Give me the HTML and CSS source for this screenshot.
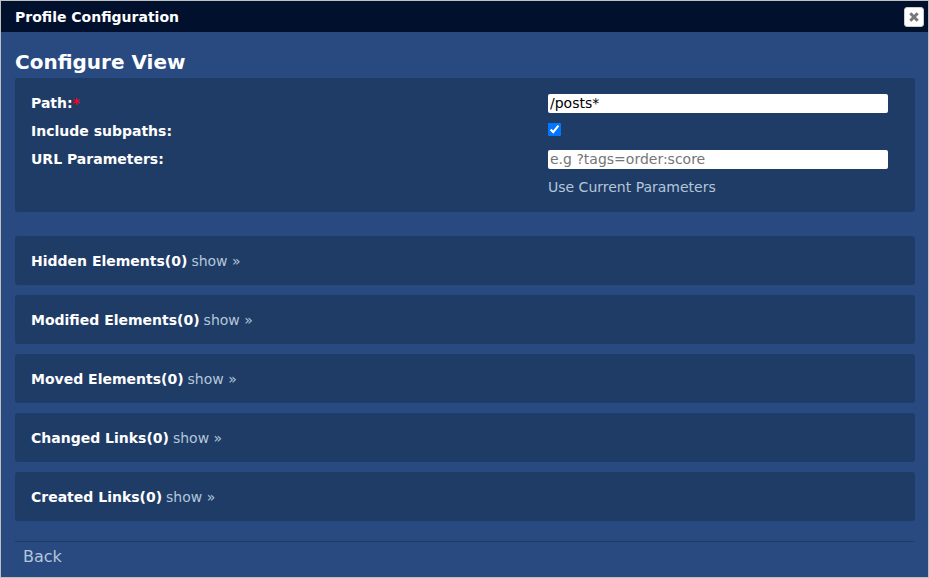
FILE: index.html
```html
<!DOCTYPE html>
<html lang="en">
<head>
<meta charset="utf-8">
<title>Profile Configuration</title>
<link rel="stylesheet" href="styles.css">
</head>
<body>
<main class="dialog">
  <header class="titlebar">
    <h1 class="title">Profile Configuration</h1>
    <button class="close" type="button" aria-label="Close">
      <svg viewBox="0 0 12 12" width="12" height="12" aria-hidden="true"><path d="M2.3 2.3 9.7 9.7M9.7 2.3 2.3 9.7"/></svg>
    </button>
  </header>
  <div class="content">
    <h2 class="heading">Configure View</h2>
    <form class="panel form">
      <label class="label" for="path">Path:<span class="required">*</span></label>
      <input class="field" id="path" type="text" value="/posts*">
      <label class="label" for="subpaths">Include subpaths:</label>
      <input class="check" id="subpaths" type="checkbox" checked>
      <label class="label" for="params">URL Parameters:</label>
      <input class="field" id="params" type="text" placeholder="e.g ?tags=order:score">
      <a class="link current" href="#">Use Current Parameters</a>
    </form>
    <div class="sections">
      <section class="panel section"><h3 class="name">Hidden Elements(0)</h3><a class="link" href="#">show »</a></section>
      <section class="panel section"><h3 class="name">Modified Elements(0)</h3><a class="link" href="#">show »</a></section>
      <section class="panel section"><h3 class="name">Moved Elements(0)</h3><a class="link" href="#">show »</a></section>
      <section class="panel section"><h3 class="name">Changed Links(0)</h3><a class="link" href="#">show »</a></section>
      <section class="panel section"><h3 class="name">Created Links(0)</h3><a class="link" href="#">show »</a></section>
    </div>
    <footer class="footer"><a class="link back" href="#">Back</a></footer>
  </div>
</main>
</body>
</html>
```
FILE: styles.css
```css
* { box-sizing: border-box; }

body {
  margin: 0;
  background: #284a81;
  color: #fff;
  font: 14px/20px Verdana, "DejaVu Sans", sans-serif;
}

h1, h2, h3 { margin: 0; }

.dialog {
  min-height: 100vh;
  border: 1px solid #c0c0c0;
  background: #284a81;
}

.titlebar {
  display: flex;
  align-items: center;
  justify-content: space-between;
  height: 31px;
  padding: 0 4px 0 14px;
  background: #00102d;
}

.title, .name, .label {
  font-size: 14px;
  font-weight: bold;
}

.close {
  display: grid;
  place-items: center;
  width: 20px;
  height: 20px;
  padding: 0;
  border: 1px solid #ccc;
  border-radius: 3px;
  background: #fff;
}

.close path {
  fill: none;
  stroke: #777;
  stroke-width: 3;
}

.content { padding: 16px 13px 0 14px; }

.heading {
  font-size: 20px;
  line-height: 28px;
  margin-bottom: 2px;
}

.panel {
  border-radius: 3px;
  background: #1f3c67;
}

.form {
  display: grid;
  grid-template-columns: 1fr 340px;
  align-items: center;
  row-gap: 8px;
  padding: 15px 27px 15px 16px;
}

.required { color: #ff0018; }

.field {
  width: 100%;
  height: 19px;
  padding: 1px 2px;
  border: 0;
  border-radius: 2px;
  background: #fff;
  color: #000;
  font: inherit;
}

.field::placeholder { color: #757575; }

.check {
  align-self: start;
  width: 13px;
  height: 13px;
  margin: 2px 0 0;
}

.link {
  color: #b4c7d9;
  text-decoration: none;
}

.current { grid-column: 2; }

.sections {
  display: grid;
  gap: 10px;
  margin-top: 24px;
}

.section {
  display: flex;
  gap: 4px;
  padding: 15px 16px 14px;
}

.footer {
  margin-top: 20px;
  padding: 5px 8px;
  border-top: 1px solid #1f3c67;
}

.back { font-size: 16px; }
```
